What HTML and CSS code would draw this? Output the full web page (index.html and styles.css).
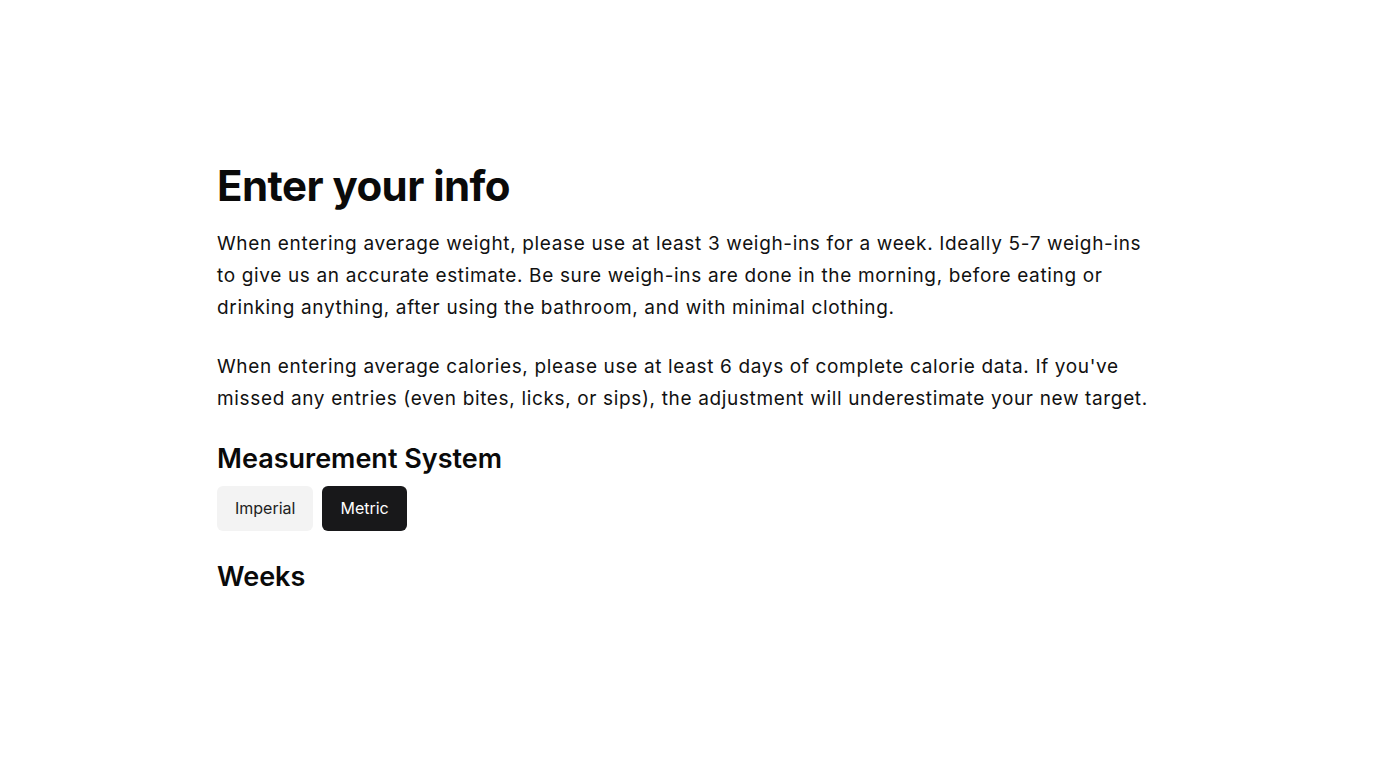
FILE: index.html
```html
<!DOCTYPE html>
<html lang="en">
<head>
<meta charset="utf-8">
<title>Enter your info</title>
<link rel="stylesheet" href="styles.css">
</head>
<body>
<main class="page">
  <h1 class="title">Enter your info</h1>
  <p class="text">When entering average weight, please use at least 3 weigh-ins for a week. Ideally 5-7 weigh-ins to give us an accurate estimate. Be sure weigh-ins are done in the morning, before eating or drinking anything, after using the bathroom, and with minimal clothing.</p>
  <p class="text">When entering average calories, please use at least 6 days of complete calorie data. If you've missed any entries (even bites, licks, or sips), the adjustment will underestimate your new target.</p>
  <h2 class="subtitle">Measurement System</h2>
  <div class="toggle">
    <button class="btn">Imperial</button>
    <button class="btn btn-active">Metric</button>
  </div>
  <h2 class="subtitle">Weeks</h2>
</main>
</body>
</html>
```
FILE: styles.css
```css
* { box-sizing: border-box; }
html, body { margin: 0; padding: 0; background: #fff; }
body {
  font-family: Inter, "Noto Sans", sans-serif;
  color: #111;
}
.page {
  width: 942px;
  margin-left: 217px;
  padding-top: 160px;
}
.title {
  font-size: 42px;
  font-weight: 700;
  line-height: 52px;
  margin: 0 0 16px;
  color: #0a0a0a;
  letter-spacing: -0.55px;
}
.text {
  font-size: 19px;
  line-height: 32px;
  margin: 0 0 26.5px;
  color: #111;
  letter-spacing: 0.65px;
}
.subtitle {
  font-size: 27px;
  font-weight: 600;
  line-height: 36px;
  margin: 0 0 9px;
  color: #0a0a0a;
}
.toggle {
  display: flex;
  gap: 9px;
  margin-bottom: 28px;
}
.btn {
  font-family: inherit;
  font-size: 16px;
  line-height: 21px;
  padding: 12px 18px;
  border: none;
  border-radius: 6px;
  background: #f3f3f3;
  color: #222;
  cursor: pointer;
}
.btn-active {
  background: #18181a;
  color: #fff;
}
```
